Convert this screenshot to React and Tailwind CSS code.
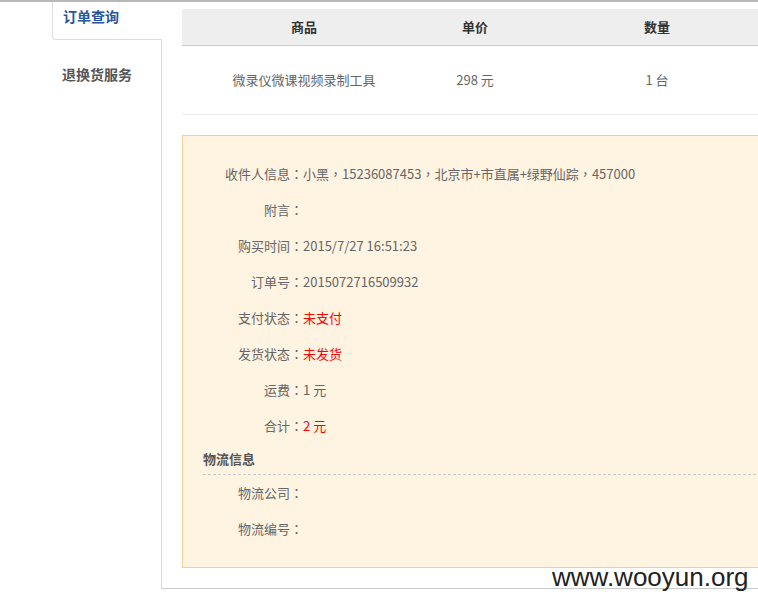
import React from "react";

const P = ({ children }) => (
  <span style={{ fontFamily: '"Noto Sans CJK TC", "Noto Sans CJK SC", sans-serif' }}>{children}</span>
);

function Row({ label, value, red }) {
  return (
    <div className="flex h-[36px] items-center text-[13px] text-[#666]">
      <div className="w-[120px] shrink-0 text-right">
        {label}
        <P>：</P>
      </div>
      <div className={red ? "text-[#ff0000]" : "text-[#666]"}>{value}</div>
    </div>
  );
}

export default function App() {
  return (
    <div
      className="relative w-[758px] h-[606px] overflow-hidden bg-white"
      style={{ fontFamily: '"Noto Sans CJK SC", "Noto Sans", sans-serif' }}
    >
      <div className="h-[2px] bg-[#b8b8b8]" />
      <div className="flex">
        {/* Sidebar */}
        <div className="flex w-[162px] shrink-0 flex-col">
          <div className="ml-[52px] h-[38px] rounded-bl-[4px] border-b border-l border-[#dcdcdc] bg-white pl-[10px] pt-[1px]">
            <span className="text-[14px] font-bold leading-[20px] text-[#27569c]">订单查询</span>
          </div>
          <div className="flex-1 border-r border-[#d8d8d8] pl-[62px] pt-[21px]">
            <span className="text-[14px] font-bold leading-[20px] text-[#555]">退换货服务</span>
          </div>
        </div>

        {/* Content */}
        <div className="min-w-0 flex-1 border-b border-[#cccccc] pb-[20px] pl-[20px] pt-[7px]">
          <div className="w-[640px]">
            <div className="flex h-[37px] border-b border-[#cccccc] bg-[#eeeeee] text-[13px] font-bold leading-[36px] text-[#333]">
              <div className="w-[244px] text-center">商品</div>
              <div className="w-[98px] text-center">单价</div>
              <div className="w-[266px] text-center">数量</div>
            </div>
            <div className="flex h-[69px] items-center border-b border-[#eeeeee] text-[13px] text-[#666]">
              <div className="w-[244px] text-center">微录仪微课视频录制工具</div>
              <div className="w-[98px] text-center">298 元</div>
              <div className="w-[266px] text-center">1 台</div>
            </div>

            <div className="mt-[20px] border border-[#f0cf96] bg-[#fff3e2] pb-[20px] pt-[20px]">
              <Row
                label="收件人信息"
                value={
                  <>
                    小黑<P>，</P>15236087453<P>，</P>北京市+市直属+绿野仙踪<P>，</P>457000
                  </>
                }
              />
              <Row label="附言" value="" />
              <Row label="购买时间" value="2015/7/27 16:51:23" />
              <Row label="订单号" value="2015072716509932" />
              <Row label="支付状态" value="未支付" red />
              <Row label="发货状态" value="未发货" red />
              <Row label="运费" value="1 元" />
              <Row label="合计" value="2 元" red />
              <div className="ml-[20px] h-[31px] border-b border-dashed border-[#cccccc] text-[13px] font-bold leading-[30px] text-[#555]">
                物流信息
              </div>
              <Row label="物流公司" value="" />
              <Row label="物流编号" value="" />
            </div>
          </div>
        </div>
      </div>

      <div
        className="absolute left-[552px] top-[561px] text-[26px] leading-[32px] text-[#222]"
        style={{ fontFamily: '"Liberation Sans", Arial, sans-serif' }}
      >
        www.wooyun.org
      </div>
    </div>
  );
}
